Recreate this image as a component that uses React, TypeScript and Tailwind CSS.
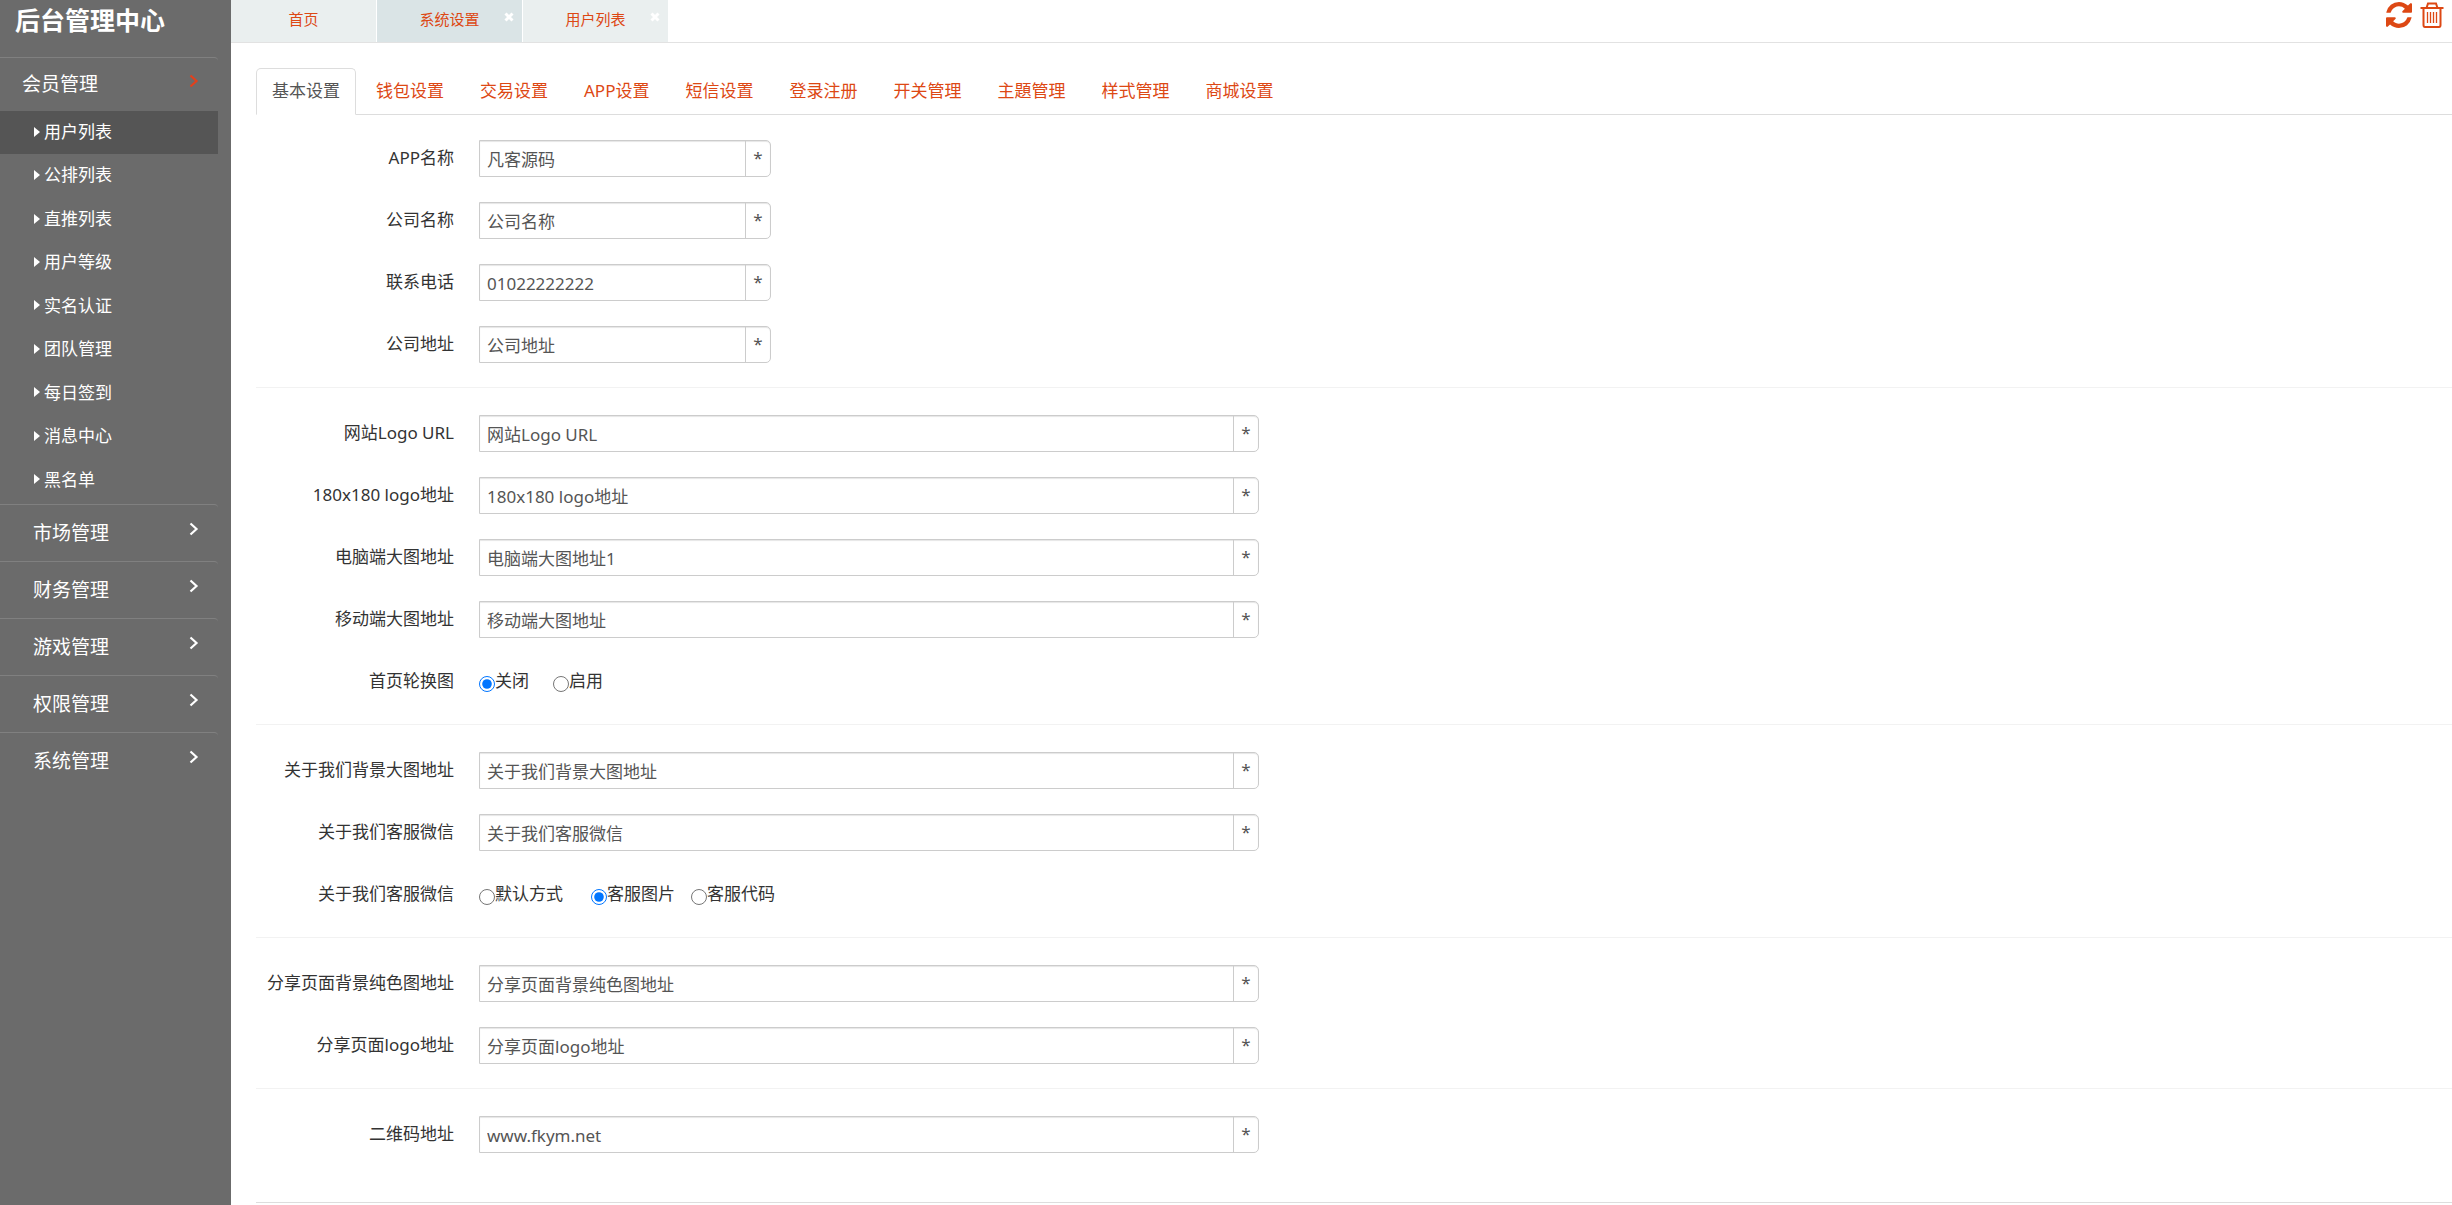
import React, { useState } from 'react';
import clsx from 'clsx';

const SUB_MENU = ['用户列表', '公排列表', '直推列表', '用户等级', '实名认证', '团队管理', '每日签到', '消息中心', '黑名单'];

const MENU = ['市场管理', '财务管理', '游戏管理', '权限管理', '系统管理'];

const PAGES = [
  { title: '首页', closable: false },
  { title: '系统设置', closable: true },
  { title: '用户列表', closable: true },
];

const TABS = [
  '基本设置', '钱包设置', '交易设置', 'APP设置', '短信设置',
  '登录注册', '开关管理', '主題管理', '样式管理', '商城设置',
];

function Chevron({ className }: { className: string }) {
  return (
    <svg viewBox="0 0 10 14" className={clsx('h-3.5 w-2.5 shrink-0', className)} fill="none" stroke="currentColor" strokeWidth="2.2" aria-hidden="true">
      <path d="M1.5 1.5 7.5 7l-6 5.5" />
    </svg>
  );
}

function RefreshIcon() {
  return (
    <svg viewBox="0 0 1536 1536" className="size-[26px]" fill="currentColor" aria-hidden="true">
      <path d="M1511 928q0 5-1 7-64 268-268 434.500t-478 166.500q-146 0-282.500-55t-243.500-157l-129 129q-19 19-45 19t-45-19-19-45v-448q0-26 19-45t45-19h448q26 0 45 19t19 45-19 45l-137 137q71 66 161 102t187 36q134 0 250-65t186-179q11-17 53-117 8-23 30-23h192q13 0 22.500 9.500t9.500 22.500zm25-800v448q0 26-19 45t-45 19h-448q-26 0-45-19t-19-45 19-45l138-138q-148-137-349-137-134 0-250 65t-186 179q-11 17-53 117-8 23-30 23h-199q-13 0-22.500-9.500t-9.500-22.500v-7q65-268 270-434.500t480-166.500q146 0 284 55.500t245 156.500l130-129q19-19 45-19t45 19 19 45z" />
    </svg>
  );
}

function TrashIcon() {
  return (
    <svg viewBox="0 0 24 26" className="h-[26px] w-6" fill="none" stroke="currentColor" strokeWidth="2" aria-hidden="true">
      <path d="M0.500 6h23" />
      <path d="M6.500 6 8 1.500h8l1.500 4.500" />
      <path d="M3.500 6v17q0 2 1.500 2h14q1.500 0 1.500-2V6" />
      <path d="M7.500 10v11M10.500 10v11M13.500 10v11M16.500 10v11" strokeWidth="1.300" />
    </svg>
  );
}

function Sidebar() {
  return (
    <aside className="w-[231px] shrink-0 bg-[#6b6b6b] text-white">
      <h1 className="h-[57px] pt-1.5 pl-[15px] text-[25px] leading-7 font-bold">后台管理中心</h1>
      <nav className="w-[218px]">
        <button type="button" className="flex h-[54px] w-full items-center justify-between rounded-tr border-t border-[#808080] pr-[19px] pl-[22px] text-[19px]">
          会员管理
          <Chevron className="mb-2 text-[#e2401c]" />
        </button>
        <ul className="grid h-[393px] auto-rows-fr pb-0.5 text-[17px]">
          {SUB_MENU.map((item, i) => (
            <li key={item}>
              <a href="#" className={clsx('flex h-full items-center gap-1 pb-0.5 pl-[34px]', i === 0 && 'bg-[#555]')}>
                <svg viewBox="0 0 6 10" className="h-2.5 w-1.5" fill="currentColor" aria-hidden="true">
                  <path d="M0 0 6 5 0 10z" />
                </svg>
                {item}
              </a>
            </li>
          ))}
        </ul>
        {MENU.map((item) => (
          <button key={item} type="button" className="flex h-[57px] w-full items-center justify-between rounded-tr border-t border-[#808080] pr-[19px] pl-[33px] text-[19px]">
            {item}
            <Chevron className="mb-2" />
          </button>
        ))}
      </nav>
    </aside>
  );
}

function PageBar() {
  return (
    <header className="flex h-[43px] justify-between border-b border-[#e2e2e2] text-[#dd4814]">
      <div className="flex gap-px">
        {PAGES.map((page, i) => (
          <div key={page.title} className={clsx('relative w-[145px] text-[15px]', i === 1 ? 'bg-[#dae4e6]' : 'bg-[#eaefef]')}>
            <a href="#" className="flex h-[39px] items-center justify-center">{page.title}</a>
            {page.closable && (
              <button type="button" aria-label={`关闭${page.title}`} className="absolute top-3 right-2 text-white">
                <svg viewBox="0 0 10 10" className="size-2.5" stroke="currentColor" strokeWidth="3" aria-hidden="true">
                  <path d="M1.500 1.500l7 7M8.500 1.500l-7 7" />
                </svg>
              </button>
            )}
          </div>
        ))}
      </div>
      <div className="flex items-start gap-2 pt-0.5 pr-2">
        <button type="button" aria-label="刷新"><RefreshIcon /></button>
        <button type="button" aria-label="清除"><TrashIcon /></button>
      </div>
    </header>
  );
}

function TextRow({ id, label, value, wide = false }: { id: string; label: string; value: string; wide?: boolean }) {
  return (
    <div className="flex h-[37px]">
      <label htmlFor={id} className="w-[198px] shrink-0 text-right leading-9 whitespace-nowrap">{label}</label>
      <div className={clsx('ml-[25px] flex rounded-r-[5px] border border-[#ccc] text-[#555] shadow-[inset_0_1px_1px_rgba(0,0,0,0.1)]', wide ? 'w-[780px]' : 'w-[292px]')}>
        <input id={id} type="text" defaultValue={value} className="min-w-0 flex-1 bg-transparent px-[7px] pt-0.5 outline-none" />
        <span className="w-[25px] border-l border-[#ccc] text-center leading-[34px]">*</span>
      </div>
    </div>
  );
}

type Option = { text: string; space?: string };

function RadioRow({ name, label, options, selected }: { name: string; label: string; options: Option[]; selected: number }) {
  return (
    <div role="radiogroup" aria-label={label} className="flex h-[37px]">
      <span className="w-[198px] shrink-0 text-right leading-9">{label}</span>
      <div className="ml-[25px] flex leading-9">
        {options.map((option, i) => (
          <label key={option.text} className={clsx('flex', option.space)}>
            <input type="radio" name={name} defaultChecked={i === selected} className="mt-[13px] size-4" />
            {option.text}
          </label>
        ))}
      </div>
    </div>
  );
}

function Section({ children }: { children: React.ReactNode }) {
  return <section className="mb-[27px] flex flex-col gap-[25px] border-b border-[#f2f2f2] pb-6">{children}</section>;
}

export default function App() {
  const [tab, setTab] = useState(0);

  return (
    <div className="flex min-h-screen bg-white font-['Noto_Sans','Noto_Sans_CJK_SC',sans-serif] text-[17px] text-[#333]">
      <Sidebar />
      <main className="min-w-0 flex-1">
        <PageBar />
        <div className="pt-[25px] pl-[25px]">
          <div role="tablist" className="flex gap-1 border-b border-[#ddd]">
            {TABS.map((item, i) => (
              <button
                key={item}
                type="button"
                role="tab"
                aria-selected={i === tab}
                onClick={() => setTab(i)}
                className={clsx(
                  '-mb-px h-[47px] rounded-t-[5px] border px-[15px] pb-0.5',
                  i === tab ? 'border-[#ddd] border-b-white text-[#555]' : 'border-transparent text-[#dd4814]',
                )}
              >
                {item}
              </button>
            ))}
          </div>

          <form className="pt-[25px]">
            <Section>
              <TextRow id="app-name" label="APP名称" value="凡客源码" />
              <TextRow id="company" label="公司名称" value="公司名称" />
              <TextRow id="phone" label="联系电话" value="01022222222" />
              <TextRow id="address" label="公司地址" value="公司地址" />
            </Section>
            <Section>
              <TextRow wide id="logo" label="网站Logo URL" value="网站Logo URL" />
              <TextRow wide id="logo-180" label="180x180 logo地址" value="180x180 logo地址" />
              <TextRow wide id="banner-pc" label="电脑端大图地址" value="电脑端大图地址1" />
              <TextRow wide id="banner-mobile" label="移动端大图地址" value="移动端大图地址" />
              <RadioRow name="carousel" label="首页轮换图" selected={0} options={[{ text: '关闭', space: 'mr-6' }, { text: '启用' }]} />
            </Section>
            <Section>
              <TextRow wide id="about-bg" label="关于我们背景大图地址" value="关于我们背景大图地址" />
              <TextRow wide id="about-wechat" label="关于我们客服微信" value="关于我们客服微信" />
              <RadioRow
                name="service"
                label="关于我们客服微信"
                selected={1}
                options={[{ text: '默认方式', space: 'mr-7' }, { text: '客服图片', space: 'mr-4' }, { text: '客服代码' }]}
              />
            </Section>
            <Section>
              <TextRow wide id="share-bg" label="分享页面背景纯色图地址" value="分享页面背景纯色图地址" />
              <TextRow wide id="share-logo" label="分享页面logo地址" value="分享页面logo地址" />
            </Section>
            <TextRow wide id="qrcode" label="二维码地址" value="www.fkym.net" />
            <hr className="mt-[49px] border-[#ddd]" />
          </form>
        </div>
      </main>
    </div>
  );
}
